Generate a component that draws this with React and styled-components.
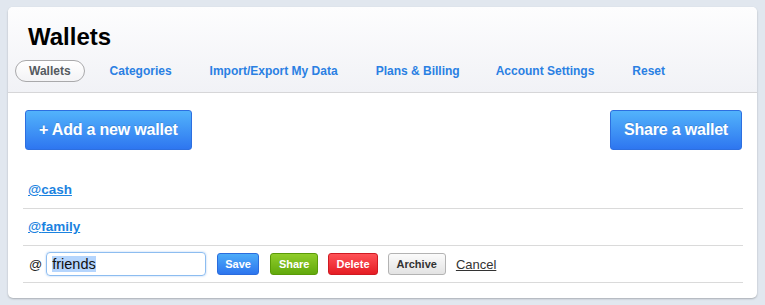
import React from "react";
import styled, { createGlobalStyle } from "styled-components";

const GlobalStyle = createGlobalStyle`
  html, body {
    margin: 0;
    padding: 0;
  }
  body {
    background: #e1e7ef;
    font-family: "Liberation Sans", Arial, Helvetica, sans-serif;
    padding: 7px 8px;
  }
`;

const tabs = [
  "Wallets",
  "Categories",
  "Import/Export My Data",
  "Plans & Billing",
  "Account Settings",
  "Reset",
];

const wallets = ["cash", "family"];

const App = () => {
  return (
    <>
      <GlobalStyle />
      <Panel>
        <Header>
          <Title>Wallets</Title>
          <TabRow>
            {tabs.map((t, i) => (
              <Tab key={t} active={i === 0}>
                {t}
              </Tab>
            ))}
          </TabRow>
        </Header>
        <Body>
          <TopActions>
            <BigButton>+ Add a new wallet</BigButton>
            <BigButton>Share a wallet</BigButton>
          </TopActions>
          <List>
            {wallets.map((w) => (
              <Row key={w}>
                <WalletLink href="#">@{w}</WalletLink>
              </Row>
            ))}
            <EditRow>
              <At>@</At>
              <NameInput>
                <Selected>friends</Selected>
              </NameInput>
              <SmallButton tone="blue">Save</SmallButton>
              <SmallButton tone="green">Share</SmallButton>
              <SmallButton tone="red">Delete</SmallButton>
              <SmallButton tone="gray">Archive</SmallButton>
              <CancelLink href="#">Cancel</CancelLink>
            </EditRow>
          </List>
        </Body>
      </Panel>
    </>
  );
};

const Panel = styled.div`
  width: 749px;
  height: 291px;
  box-sizing: border-box;
  background: #fff;
  border-radius: 5px;
  box-shadow: 0 1px 2px rgba(0, 0, 0, 0.25);
  overflow: hidden;
`;

const Header = styled.div`
  height: 86px;
  box-sizing: border-box;
  background: linear-gradient(#fdfdfe, #f1f2f6);
  border-bottom: 1px solid #d6d6d8;
  padding: 16px 0 0 7px;
`;

const Title = styled.h1`
  margin: 0 0 0 13px;
  font-size: 24px;
  line-height: 28px;
  font-weight: bold;
  color: #000;
`;

const TabRow = styled.div`
  display: flex;
  align-items: center;
  margin-top: 9px;
`;

// gaps between tabs are not quite even in the original, so tweak a few
const Tab = styled.div`
  height: 22px;
  box-sizing: border-box;
  line-height: 20px;
  font-size: 12px;
  font-weight: bold;
  padding: 0 ${(p) => (p.active ? "13px" : "0")};
  margin-right: ${(p) => (p.active ? "24px" : "36px")};
  color: ${(p) => (p.active ? "#555a60" : "#2a80e3")};
  border: 1px solid ${(p) => (p.active ? "#a9a9ab" : "transparent")};
  border-radius: 11px;
  background: ${(p) => (p.active ? "linear-gradient(#ffffff, #f3f3f5)" : "none")};
  &:nth-child(4) { margin-right: 34px; }
`;

const Body = styled.div`
  padding: 17px 14px 0 15px;
`;

const TopActions = styled.div`
  display: flex;
  justify-content: space-between;
  padding: 0 1px 0 2px;
`;

const BigButton = styled.button`
  height: 40px;
  padding: 0 13px;
  border: 1px solid #2d6fe0;
  border-radius: 3px;
  background: linear-gradient(#52b3fb, #2e76f0);
  color: #fff;
  font-family: "Liberation Sans", Arial, sans-serif;
  font-weight: bold;
  font-size: 16px;
  text-shadow: 0 -1px 0 rgba(0, 0, 0, 0.15);
  letter-spacing: -0.2px;
`;

const List = styled.div`
  margin-top: 22px;
  display: flex;
  flex-direction: column;
`;

const Row = styled.div`
  height: 37px;
  box-sizing: border-box;
  border-bottom: 1px solid #dadada;
  display: flex;
  align-items: center;
  padding: 0 0 1px 5px;
`;

const WalletLink = styled.a`
  color: #1b83e0;
  font-size: 13.5px;
  font-weight: bold;
  text-decoration: underline;
`;

const EditRow = styled(Row)`
  padding-left: 6px;
  padding-top: 1px;
`;

const At = styled.span`
  font-size: 13px;
  color: #222;
  margin-right: 4px;
`;

const NameInput = styled.div`
  width: 160px;
  height: 24px;
  box-sizing: border-box;
  border: 1px solid #8dbdf0;
  border-radius: 4px;
  box-shadow: 0 0 2px rgba(80, 150, 240, 0.5);
  padding: 3px 4px 0 5px;
  font-size: 14.5px;
  color: #111;
  margin-right: 11px;
`;

const Selected = styled.span`
  background: #b5d5fd;
`;

// [top, bottom, border, text, side padding]
const tones = {
  blue: ["#4cacf9", "#2d75ee", "#2a6cdd", "#fff", 7],
  green: ["#90cd2a", "#62a90c", "#5a9a08", "#fff", 8],
  red: ["#ff5257", "#e51d24", "#cf1a22", "#fff", 7],
  gray: ["#fbfbfb", "#e3e3e3", "#b3b3b3", "#333", 8],
};

const SmallButton = styled.button`
  height: 22px;
  padding: 0 ${(p) => tones[p.tone][4]}px;
  margin-right: 10px;
  border: 1px solid ${(p) => tones[p.tone][2]};
  border-radius: 3px;
  background: linear-gradient(${(p) => tones[p.tone][0]}, ${(p) => tones[p.tone][1]});
  color: ${(p) => tones[p.tone][3]};
  font-family: "Liberation Sans", Arial, sans-serif;
  font-weight: bold;
  font-size: 11px;
  &:first-of-type { margin-right: 11px; }
`;

const CancelLink = styled.a`
  color: #333;
  font-size: 13px;
  text-decoration: underline;
`;

export default App;
